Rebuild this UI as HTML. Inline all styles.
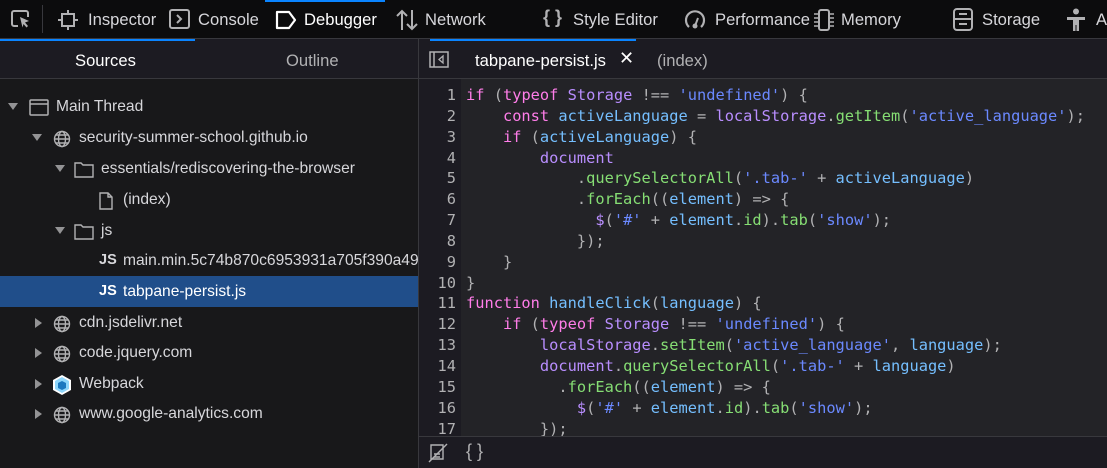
<!DOCTYPE html>
<html><head><meta charset="utf-8"><style>
*{margin:0;padding:0;box-sizing:border-box}
body{width:1107px;height:468px;overflow:hidden;background:#18181a;font-family:"Liberation Sans",sans-serif;color:#d7d7db;position:relative}
.top{position:absolute;left:0;top:0;width:1107px;height:39px;background:#0c0c0d;font-size:16.6px;color:#d7d7db}
.top .t{position:absolute;top:10px;white-space:nowrap}
.top svg{position:absolute}
.sub{position:absolute;top:39px;height:40px;background:#1c1b22;border-bottom:1px solid #38383d}
.code{position:absolute;left:419px;top:79px;width:688px;height:357px;background:#232327;overflow:hidden}
.gut{position:absolute;left:0;top:0;width:42px;height:100%;background:#1c1b22}
pre{position:absolute;top:6px;left:0;font-family:"DejaVu Sans Mono",monospace;font-size:15.35px;line-height:20.85px;color:#b1b1b3}
.ln{width:37px;text-align:right;color:#b1b1b3}
.src{left:47px}
.k{color:#ff7de9}.i{color:#75bfff}.p{color:#86de74}.s{color:#6b89ff}.v{color:#b98eff}
.row{position:absolute;left:0;width:418px;height:31px;font-size:15.6px;color:#d7d7db;white-space:nowrap}
.row span.tx{position:absolute;top:7px}
.arr{position:absolute;top:12px;width:0;height:0}
.ad{border-left:5px solid transparent;border-right:5px solid transparent;border-top:7px solid #939395}
.ar{border-top:5px solid transparent;border-bottom:5px solid transparent;border-left:7px solid #939395;top:11px}
.row svg{position:absolute;top:8px}
.js{position:absolute;top:7px;font-weight:bold;font-size:14.5px;color:#d7d7db}
</style></head><body>
<div class="top">
<svg style="left:10px;top:9px" width="22" height="21" viewBox="0 0 22 21"><path d="M8 17H4a2 2 0 0 1-2-2V4a2 2 0 0 1 2-2h12a2 2 0 0 1 2 2v4" fill="none" stroke="#b1b1b3" stroke-width="2"/><path d="M10 8l9 4-4 1.5 3 3.5-1.5 1.5-3-3.5-1 3.5z" fill="#b1b1b3"/></svg>
<div style="position:absolute;left:42px;top:5px;width:1px;height:28px;background:#38383d"></div>
<svg style="left:57px;top:10px" width="22" height="20" viewBox="0 0 22 20"><rect x="5" y="4" width="12" height="12" fill="none" stroke="#b1b1b3" stroke-width="2"/><path d="M11 0v4M11 16v4M1 10h4M17 10h4" stroke="#b1b1b3" stroke-width="2"/></svg>
<span class="t" style="left:88px">Inspector</span>
<svg style="left:169px;top:9px" width="22" height="20" viewBox="0 0 22 20"><rect x="1" y="1" width="19" height="18" rx="2" fill="none" stroke="#b1b1b3" stroke-width="2"/><path d="M8 6l4 4-4 4" fill="none" stroke="#b1b1b3" stroke-width="2"/></svg>
<span class="t" style="left:198px">Console</span>
<div style="position:absolute;left:265px;top:0;width:120px;height:2px;background:#0a84ff"></div>
<svg style="left:275px;top:10px" width="22" height="20" viewBox="0 0 22 20"><path d="M2 2h12l6 8-6 8H2z" fill="none" stroke="#fff" stroke-width="2.2" stroke-linejoin="round"/></svg>
<span class="t" style="left:304px;color:#fff">Debugger</span>
<svg style="left:396px;top:9px" width="22" height="22" viewBox="0 0 22 22"><path d="M6 21V2M1 7l5-5 5 5M16 1v19M11 15l5 5 5-5" fill="none" stroke="#b1b1b3" stroke-width="2"/></svg>
<span class="t" style="left:425px">Network</span>
<span class="t" style="left:543px;top:7px;font-size:18px;font-weight:bold;color:#b1b1b3">{ }</span>
<span class="t" style="left:573px">Style Editor</span>
<svg style="left:684px;top:9px" width="22" height="22" viewBox="0 0 22 22"><path d="M5 18A9 9 0 1 1 17 18" fill="none" stroke="#b1b1b3" stroke-width="2.2"/><circle cx="11" cy="17" r="2.5" fill="#b1b1b3"/><path d="M11 17l3-8" stroke="#b1b1b3" stroke-width="2"/></svg>
<span class="t" style="left:715px">Performance</span>
<svg style="left:813px;top:8px" width="22" height="24" viewBox="0 0 22 24"><rect x="6" y="2" width="10" height="20" rx="2" fill="none" stroke="#b1b1b3" stroke-width="2"/><path d="M1 6h4M1 10h4M1 14h4M1 18h4M17 6h4M17 10h4M17 14h4M17 18h4" stroke="#b1b1b3" stroke-width="1.5"/></svg>
<span class="t" style="left:841px">Memory</span>
<svg style="left:953px;top:8px" width="20" height="24" viewBox="0 0 20 24"><rect x="1" y="1" width="18" height="21" rx="3" fill="none" stroke="#b1b1b3" stroke-width="2"/><path d="M1 11h18M6 6h8M6 16h8" stroke="#b1b1b3" stroke-width="2"/></svg>
<span class="t" style="left:982px">Storage</span>
<svg style="left:1066px;top:8px" width="20" height="24" viewBox="0 0 20 24"><circle cx="10" cy="3.5" r="3" fill="#b1b1b3"/><path d="M1 9h18v3h-6v11h-2.5v-6h-1v6H7V12H1z" fill="#b1b1b3"/></svg>
<span class="t" style="left:1096px">A</span>
</div>
<div style="position:absolute;left:0;top:38px;width:1107px;height:1px;background:#38383d"></div>
<div class="sub" style="left:0;width:418px;font-size:16.6px">
<div style="position:absolute;left:0;top:0;width:195px;height:2px;background:#0a84ff"></div>
<span style="position:absolute;left:75px;top:12px;color:#fff">Sources</span>
<span style="position:absolute;left:286px;top:12px;color:#b1b1b3">Outline</span>
</div>
<div style="position:absolute;left:418px;top:39px;width:1px;height:429px;background:#38383d"></div>
<div class="sub" style="left:419px;width:688px;font-size:16.6px">
<div style="position:absolute;left:11px;top:0;width:206px;height:2px;background:#0a84ff"></div>
<svg style="position:absolute;left:10px;top:12px" width="20" height="17" viewBox="0 0 20 17"><rect x="1" y="1" width="18" height="15" fill="none" stroke="#b1b1b3" stroke-width="1.5"/><path d="M5 1v15" stroke="#b1b1b3" stroke-width="1.5"/><path d="M14 5l-4 3.5 4 3.5z" fill="none" stroke="#b1b1b3" stroke-width="1.3"/></svg>
<span style="position:absolute;left:56px;top:12px;color:#fff">tabpane-persist.js</span>
<span style="position:absolute;left:200px;top:9px;color:#fff;font-size:18px">✕</span>
<span style="position:absolute;left:238px;top:12px;color:#b1b1b3">(index)</span>
</div>

<div class="row" style="top:91px"><div class="arr ad" style="left:8px"></div><svg style="left:29px" width="20" height="17" viewBox="0 0 20 17"><rect x="1" y="1" width="18" height="15" rx="1" fill="none" stroke="#b1b1b3" stroke-width="1.5"/><path d="M1 5h18" stroke="#b1b1b3" stroke-width="1.5"/></svg><span class="tx" style="left:56px">Main Thread</span></div>
<div class="row" style="top:122px"><div class="arr ad" style="left:32px"></div><svg style="left:53px" width="18" height="18" viewBox="0 0 18 18"><g fill="none" stroke="#b1b1b3" stroke-width="1.4"><circle cx="9" cy="9" r="7.5"/><ellipse cx="9" cy="9" rx="3.5" ry="7.5"/><path d="M1.5 9h15M3 5h12M3 13h12"/></g></svg><span class="tx" style="left:79px">security-summer-school.github.io</span></div>
<div class="row" style="top:153px"><div class="arr ad" style="left:55px"></div><svg style="left:74px" width="20" height="17" viewBox="0 0 20 17"><path d="M1 2h6l2 2h10v12H1z" fill="none" stroke="#b1b1b3" stroke-width="1.4"/></svg><span class="tx" style="left:101px">essentials/rediscovering-the-browser</span></div>
<div class="row" style="top:184px"><svg style="left:99px" width="14" height="18" viewBox="0 0 14 18"><path d="M1 1h8l4 4v12H1z M9 1v4h4" fill="none" stroke="#b1b1b3" stroke-width="1.4"/></svg><span class="tx" style="left:123px">(index)</span></div>
<div class="row" style="top:215px"><div class="arr ad" style="left:55px"></div><svg style="left:74px" width="20" height="17" viewBox="0 0 20 17"><path d="M1 2h6l2 2h10v12H1z" fill="none" stroke="#b1b1b3" stroke-width="1.4"/></svg><span class="tx" style="left:101px">js</span></div>
<div class="row" style="top:245px"><span class="js" style="left:99px">JS</span><span class="tx" style="left:123px">main.min.5c74b870c6953931a705f390a49</span></div>
<div class="row" style="top:276px;background:#204e8a;color:#fff"><span class="js" style="left:99px;color:#fff">JS</span><span class="tx" style="left:123px">tabpane-persist.js</span></div>
<div class="row" style="top:307px"><div class="arr ar" style="left:35px"></div><svg style="left:53px" width="18" height="18" viewBox="0 0 18 18"><g fill="none" stroke="#b1b1b3" stroke-width="1.4"><circle cx="9" cy="9" r="7.5"/><ellipse cx="9" cy="9" rx="3.5" ry="7.5"/><path d="M1.5 9h15M3 5h12M3 13h12"/></g></svg><span class="tx" style="left:79px">cdn.jsdelivr.net</span></div>
<div class="row" style="top:337px"><div class="arr ar" style="left:35px"></div><svg style="left:53px" width="18" height="18" viewBox="0 0 18 18"><g fill="none" stroke="#b1b1b3" stroke-width="1.4"><circle cx="9" cy="9" r="7.5"/><ellipse cx="9" cy="9" rx="3.5" ry="7.5"/><path d="M1.5 9h15M3 5h12M3 13h12"/></g></svg><span class="tx" style="left:79px">code.jquery.com</span></div>
<div class="row" style="top:368px"><div class="arr ar" style="left:35px"></div><svg style="left:51px;top:6px" width="22" height="22" viewBox="0 0 22 22"><path d="M11 1l9 5v10l-9 5-9-5V6z" fill="#fff"/><path d="M11 3l7 4v8l-7 4-7-4V7z" fill="#8ed6fb"/><path d="M11 7l4 2v5l-4 2-4-2V9z" fill="#1c78c0"/></svg><span class="tx" style="left:79px">Webpack</span></div>
<div class="row" style="top:398px"><div class="arr ar" style="left:35px"></div><svg style="left:53px" width="18" height="18" viewBox="0 0 18 18"><g fill="none" stroke="#b1b1b3" stroke-width="1.4"><circle cx="9" cy="9" r="7.5"/><ellipse cx="9" cy="9" rx="3.5" ry="7.5"/><path d="M1.5 9h15M3 5h12M3 13h12"/></g></svg><span class="tx" style="left:79px">www.google-analytics.com</span></div>

<div class="code"><div class="gut"></div>
<pre class="ln">1
2
3
4
5
6
7
8
9
10
11
12
13
14
15
16
17</pre>
<pre class="src"><span class="k">if</span> (<span class="k">typeof</span> <span class="v">Storage</span> !== <span class="s">'undefined'</span>) {
    <span class="k">const</span> <span class="i">activeLanguage</span> = <span class="v">localStorage</span>.<span class="p">getItem</span>(<span class="s">'active_language'</span>);
    <span class="k">if</span> (<span class="i">activeLanguage</span>) {
        <span class="v">document</span>
            .<span class="p">querySelectorAll</span>(<span class="s">'.tab-'</span> + <span class="i">activeLanguage</span>)
            .<span class="p">forEach</span>((<span class="i">element</span>) =&gt; {
              <span class="v">$</span>(<span class="s">'#'</span> + <span class="i">element</span>.<span class="p">id</span>).<span class="p">tab</span>(<span class="s">'show'</span>);
            });
    }
}
<span class="k">function</span> <span class="i">handleClick</span>(<span class="i">language</span>) {
    <span class="k">if</span> (<span class="k">typeof</span> <span class="v">Storage</span> !== <span class="s">'undefined'</span>) {
        <span class="v">localStorage</span>.<span class="p">setItem</span>(<span class="s">'active_language'</span>, <span class="i">language</span>);
        <span class="v">document</span>.<span class="p">querySelectorAll</span>(<span class="s">'.tab-'</span> + <span class="i">language</span>)
          .<span class="p">forEach</span>((<span class="i">element</span>) =&gt; {
            <span class="v">$</span>(<span class="s">'#'</span> + <span class="i">element</span>.<span class="p">id</span>).<span class="p">tab</span>(<span class="s">'show'</span>);
        });</pre>
</div>
<div style="position:absolute;left:419px;top:436px;width:688px;height:32px;background:#1c1b22;border-top:1px solid #38383d">
<svg style="position:absolute;left:9px;top:6px" width="20" height="20" viewBox="0 0 20 20"><path d="M3 2h12v14H3z M6 11h6M6 14h6" fill="none" stroke="#b1b1b3" stroke-width="1.4"/><path d="M1 19L19 1" stroke="#b1b1b3" stroke-width="1.4"/></svg>
<span style="position:absolute;left:47px;top:4px;font-size:18px;color:#b1b1b3">{ }</span>
</div>
</body></html>
